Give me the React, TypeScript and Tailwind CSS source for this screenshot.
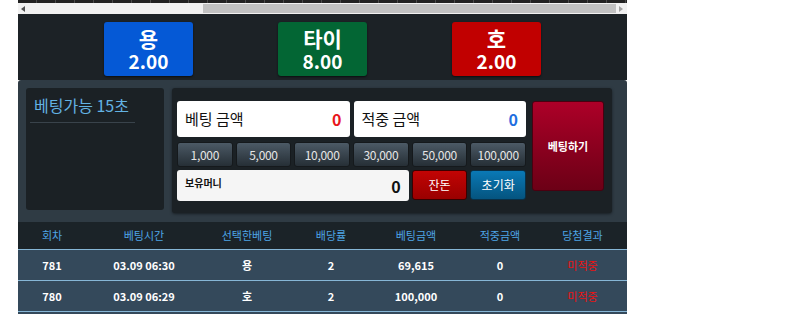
import React from "react"

const FONT = { fontFamily: '"Noto Sans CJK KR", "Noto Sans", sans-serif' }

const ODDS = [
  { label: "용", odd: "2.00", color: "bg-[#0559d6]" },
  { label: "타이", odd: "8.00", color: "bg-[#036634]" },
  { label: "호", odd: "2.00", color: "bg-[#c10000]" },
]

const CHIPS = ["1,000", "5,000", "10,000", "30,000", "50,000", "100,000"]

const HISTORY = [
  { round: "781", time: "03.09 06:30", pick: "용", odd: "2", bet: "69,615", win: "0", result: "미적중" },
  { round: "780", time: "03.09 06:29", pick: "호", odd: "2", bet: "100,000", win: "0", result: "미적중" },
]

const COLS = "grid grid-cols-[68px_116px_90px_78px_92px_76px_89px]"

export default function App() {
  return (
    <div className="w-[800px] h-[314px] bg-white overflow-hidden" style={FONT}>
      <div className="ml-[18px] w-[609px]">
        {/* top strip of the board above */}
        <div className="flex h-[3px] bg-[#222] overflow-hidden">
          {Array.from({ length: 33 }).map((_, i) => (
            <div key={i} className="w-[19px] shrink-0 border-r border-[#4a4a4a]" />
          ))}
        </div>

        {/* horizontal scrollbar */}
        <div className="relative h-[11px] bg-[#f1f1f1]">
          <div className="absolute left-[3px] top-[3px] w-0 h-0 border-y-[3px] border-y-transparent border-r-[4px] border-r-[#505050]" />
          <div className="absolute left-[185px] top-[1px] w-[413px] h-[9px] bg-[#c1c1c1]" />
          <div className="absolute right-[4px] top-[3px] w-0 h-0 border-y-[3px] border-y-transparent border-l-[4px] border-l-[#a3a3a3]" />
        </div>

        {/* odds */}
        <div className="flex justify-center gap-[85px] bg-[#1c2226] pt-2 h-[66px]">
          {ODDS.map((o) => (
            <div
              key={o.label}
              className={`${o.color} w-[89px] h-[54px] rounded-[3px] shadow-[0_1px_2px_rgba(0,0,0,0.6)] flex flex-col items-center justify-center text-white font-bold`}
            >
              <span className="text-[21px] leading-[23px]">{o.label}</span>
              <span className="text-[19px] leading-[21px]">{o.odd}</span>
            </div>
          ))}
        </div>

        {/* betting panel */}
        <div className="flex gap-2 bg-[#2f3b44] rounded-t-[3px] pl-2 pr-[15px] pt-2 h-[142px]">
          <div className="w-[138px] h-[122px] bg-[#1b2125] rounded-[3px] px-1 pt-[5px]">
            <div className="text-[16px] leading-[24px] text-[#63b3e3] pl-1 pb-[5px] border-b border-[#39434b] w-[105px] whitespace-nowrap">
              베팅가능 15초
            </div>
          </div>

          <div className="flex gap-[6px] w-[440px] h-[125px] bg-[#1b2125] rounded-[3px] pl-[5px] pt-[13px] shadow-[0_1px_3px_rgba(0,0,0,0.5)]">
            <div className="w-[349px] flex flex-col">
              <div className="flex gap-1 h-[36px]">
                <div className="flex-1 bg-white rounded-[3px] flex items-center justify-between px-2">
                  <span className="text-[15px] text-[#111]">베팅 금액</span>
                  <span className="text-[16px] font-bold text-[#e8161b]">0</span>
                </div>
                <div className="flex-1 bg-white rounded-[3px] flex items-center justify-between px-2">
                  <span className="text-[15px] text-[#111]">적중 금액</span>
                  <span className="text-[16px] font-bold text-[#1f6fe0]">0</span>
                </div>
              </div>

              <div className="grid grid-cols-6 gap-[3px] mt-[5px] h-[25px]">
                {CHIPS.map((c) => (
                  <div
                    key={c}
                    className="rounded-[3px] border border-[#15191c] bg-gradient-to-b from-[#4c5a66] to-[#262f36] flex items-center justify-center text-[12px] text-[#e6e6e6] tracking-[-0.3px]"
                  >
                    {c}
                  </div>
                ))}
              </div>

              <div className="grid grid-cols-6 gap-[3px] mt-[3px] h-[31px]">
                <div className="col-span-4 bg-[#f5f5f5] rounded-[3px] relative">
                  <span className="absolute left-2 top-[5px] text-[10px] font-bold text-[#111]">보유머니</span>
                  <span className="absolute right-2 top-[4px] text-[16px] font-bold text-[#111]">0</span>
                </div>
                <div className="h-[30px] rounded-[3px] border border-[#3a0000] bg-gradient-to-b from-[#c20404] to-[#9a0000] flex items-center justify-center text-[12px] text-white">
                  잔돈
                </div>
                <div className="h-[30px] rounded-[3px] border border-[#083048] bg-gradient-to-b from-[#0a79b6] to-[#05547f] flex items-center justify-center text-[12px] text-white">
                  초기화
                </div>
              </div>
            </div>

            <div className="w-[72px] h-[90px] rounded-[3px] border border-[#4a0010] bg-gradient-to-b from-[#ad0028] to-[#6c0016] flex items-center justify-center text-[11px] font-bold text-white">
              베팅하기
            </div>
          </div>
        </div>

        {/* history table */}
        <div className={`${COLS} h-[27px] items-center bg-[#1b2328] text-[11px] text-[#4ea5e6] text-center`}>
          <span>회차</span>
          <span>베팅시간</span>
          <span>선택한베팅</span>
          <span>배당률</span>
          <span>베팅금액</span>
          <span>적중금액</span>
          <span>당첨결과</span>
        </div>
        {HISTORY.map((h) => (
          <div
            key={h.round}
            className={`${COLS} h-[31px] items-center bg-[#34495b] border-t border-[#86b6d6] text-[11px] font-bold text-white text-center`}
          >
            <span>{h.round}</span>
            <span>{h.time}</span>
            <span>{h.pick}</span>
            <span>{h.odd}</span>
            <span>{h.bet}</span>
            <span>{h.win}</span>
            <span className="font-normal text-[#ee1111]">{h.result}</span>
          </div>
        ))}
        <div className="h-[31px] bg-[#34495b] border-t border-[#86b6d6]" />
      </div>
    </div>
  )
}
